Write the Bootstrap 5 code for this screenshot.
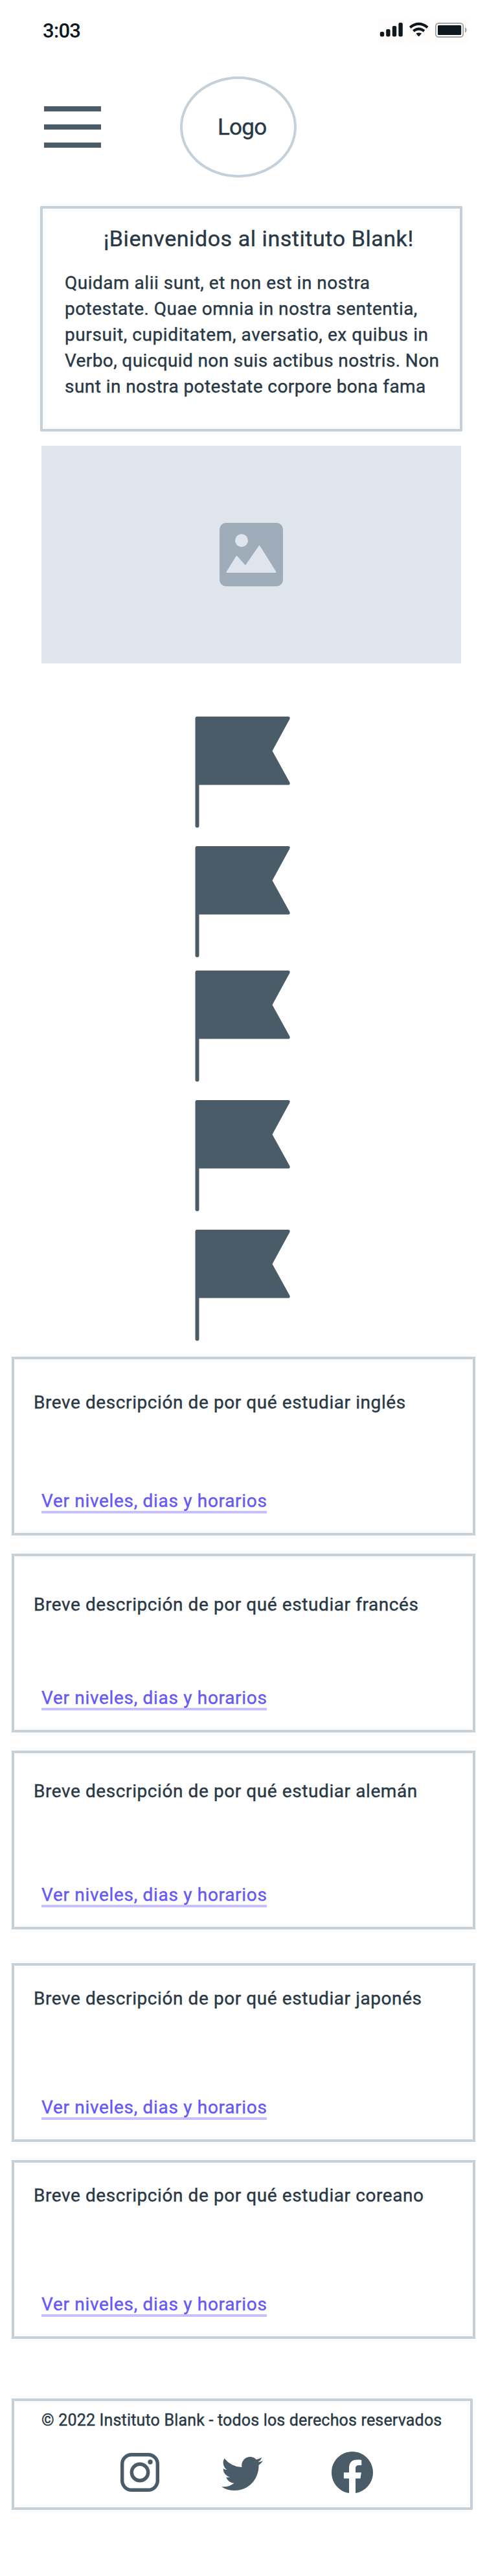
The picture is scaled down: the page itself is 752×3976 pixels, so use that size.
<!DOCTYPE html>
<html lang="es">
<head>
<meta charset="utf-8">
<meta name="viewport" content="width=device-width, initial-scale=1">
<title>Instituto Blank</title>
<link href="https://cdn.jsdelivr.net/npm/bootstrap@5.3.0/dist/css/bootstrap.min.css" rel="stylesheet">
<style>
  :root{--ink:#293845;--slate:#4b5c69;--line:#c4d0da}
  body{font-family:Roboto,"Liberation Sans",sans-serif;font-weight:400;font-size:28px;line-height:40px;color:var(--ink);background:#fff;min-height:3976px}
  svg{display:block;flex:none}
  .status-bar{padding:26px 30px 0 66px;height:66px}
  .clock{font-size:31px;font-weight:500;letter-spacing:-.7px;color:#10181f;padding-top:2px}
  .top-nav{padding:52px 0 0 68px}
  .menu-btn{margin-right:122px;color:var(--slate)}
  .logo{width:180px;height:156px;border:4px solid var(--line);border-radius:50%;padding:2px 0 0 54px;font-size:35px;letter-spacing:-.75px}
  .logo,.welcome,.course,.foot p{-webkit-text-stroke:.4px currentColor}
  .box{border:4px solid var(--line);border-radius:0;background:#fff}
  .welcome{margin:44px 38px 0 62px;height:348px;padding:26px 0 0 34px}
  .welcome h1{font-size:34px;line-height:40px;font-weight:400;letter-spacing:.56px;margin:0 0 29px 60px}
  .welcome p span{display:block;white-space:nowrap}
  .k1{letter-spacing:.51px}.k2{letter-spacing:.45px}.k3{letter-spacing:.59px}.k4{letter-spacing:.38px}.k5{letter-spacing:.44px}
  .hero{margin:22px 40px 0 64px;height:336px;background:#dfe5ed}
  .flags{margin:82px 0 0 301px;gap:28px;color:var(--slate)}
  .flags svg:nth-child(2){margin-bottom:-8px}
  .courses{margin:24px 18px 0;gap:28px}
  .course{height:276px;padding:31px 0 30px 30px;letter-spacing:.58px;white-space:nowrap}
  .course a{height:40px;width:348px;margin-left:12px;padding-top:1px;color:#6558f5;border-bottom:4px solid #c8c0fd;letter-spacing:.69px;text-decoration:none}
  .foot{margin:92px 22px 0 18px;height:172px;padding-top:14px}
  .foot p{font-size:25px;line-height:32px;letter-spacing:.18px;margin:0 0 32px 42px;white-space:nowrap}
  .social{margin-left:164px;color:var(--slate)}
  .social a{color:inherit}
  .social a:nth-child(2){margin-left:96px}
  .social a:nth-child(3){margin-left:106px}
</style>
</head>
<body>
<header>
  <div class="status-bar d-flex justify-content-between">
    <span class="clock">3:03</span>
    <svg width="138" height="40" viewBox="584 26 138 40" fill="#10181f">
      <path fill="#fffdfb" d="M584 26h40v40h-40zM626 26h40v40h-40zM668 26h54v40h-54z"/>
      <rect x="586.8" y="49" width="6.4" height="7.5" rx="2.3"/><rect x="596.2" y="45" width="6.4" height="11.5" rx="2.3"/><rect x="605.8" y="40" width="6.4" height="16.5" rx="2.3"/><rect x="615.4" y="35" width="6.4" height="21.5" rx="2.3"/>
      <path d="M633.2 42.3Q646.7 31.6 660.2 42.3" fill="none" stroke="#10181f" stroke-width="4.2"/>
      <path d="M638.3 47.9Q646.7 41.3 655.1 47.9" fill="none" stroke="#10181f" stroke-width="4"/>
      <path d="M642.3 51.7q4.4-2.6 8.8 0L646.7 56.5z"/>
      <rect x="672.8" y="35.8" width="42.4" height="21.4" rx="4.5" fill="#fff" stroke="#9c9c9c" stroke-width="1.7"/>
      <rect x="676" y="39" width="36.2" height="15" rx="1.5"/>
      <path d="M718 42q2.6 1.2 2.6 4.2t-2.6 4.2z" fill="#a3a3a3"/>
    </svg>
  </div>
  <nav class="top-nav d-flex align-items-center">
    <a class="menu-btn" href="#" aria-label="Menú"><svg width="88" height="64" viewBox="0 0 88 64" fill="currentColor"><path d="M0 0h88v8H0zM0 28h88v8H0zM0 56h88v8H0z"/></svg></a>
    <div class="logo d-flex align-items-center">Logo</div>
  </nav>
</header>
<main>
  <section class="box welcome">
    <h1>¡Bienvenidos al instituto Blank!</h1>
    <p class="m-0"><span class="k1">Quidam alii sunt, et non est in nostra</span><span class="k2">potestate. Quae omnia in nostra sententia,</span><span class="k3">pursuit, cupiditatem, aversatio, ex quibus in</span><span class="k4">Verbo, quicquid non suis actibus nostris. Non</span><span class="k5">sunt in nostra potestate corpore bona fama</span></p>
  </section>
  <div class="hero d-flex align-items-center justify-content-center">
    <svg width="98" height="98" viewBox="0 0 98 98"><rect width="98" height="98" rx="10" fill="#9eadb9"/><circle cx="34" cy="27.3" r="10" fill="#dfe5ed"/><path d="M26.4 52L40 67 61.5 36 86.5 76H11.5z" fill="#dfe5ed" stroke="#dfe5ed" stroke-width="2" stroke-linejoin="round"/></svg>
  </div>
  <div class="flags d-flex flex-column">
    <svg width="148" height="172" viewBox="0 0 148 172" fill="currentColor"><path id="flag" d="M3 0H144.500Q148 .6 146 4.500L119.500 53 146 101Q148 105 144.500 105.500H6.500V168.500a3 3 0 0 1-6 0V3Q.5 0 3 0z"/></svg>
    <svg width="148" height="172" viewBox="0 0 148 172" fill="currentColor"><use href="#flag"/></svg>
    <svg width="148" height="172" viewBox="0 0 148 172" fill="currentColor"><use href="#flag"/></svg>
    <svg width="148" height="172" viewBox="0 0 148 172" fill="currentColor"><use href="#flag"/></svg>
    <svg width="148" height="172" viewBox="0 0 148 172" fill="currentColor"><use href="#flag"/></svg>
  </div>
  <div class="courses d-flex flex-column">
    <article class="box course d-flex flex-column justify-content-between"><div class="pt-3">Breve descripción de por qué estudiar inglés</div><a href="#">Ver niveles, dias y horarios</a></article>
    <article class="box course d-flex flex-column justify-content-between"><div class="pt-4">Breve descripción de por qué estudiar francés</div><a href="#">Ver niveles, dias y horarios</a></article>
    <article class="box course d-flex flex-column justify-content-between"><div class="pt-2">Breve descripción de por qué estudiar alemán</div><a href="#">Ver niveles, dias y horarios</a></article>
    <article class="box course d-flex flex-column justify-content-between mt-4"><div>Breve descripción de por qué estudiar japonés</div><a href="#">Ver niveles, dias y horarios</a></article>
    <article class="box course d-flex flex-column justify-content-between"><div>Breve descripción de por qué estudiar coreano</div><a href="#">Ver niveles, dias y horarios</a></article>
  </div>
</main>
<footer class="box foot">
  <p>© 2022 Instituto Blank - todos los derechos reservados</p>
  <div class="social d-flex align-items-center">
    <a href="#" aria-label="Instagram"><svg width="60" height="60" viewBox="0 0 60 60" fill="none" stroke="currentColor" stroke-width="5.4"><rect x="2.700" y="2.700" width="54.600" height="54.600" rx="14.500"/><circle cx="30" cy="30" r="12.700"/><circle cx="46" cy="14" r="3.700" fill="currentColor" stroke="none"/></svg></a>
    <a href="#" aria-label="Twitter"><svg width="64" height="64" viewBox="0 0 16 16" fill="currentColor"><path d="M5.026 15c6.038 0 9.341-5.003 9.341-9.334 0-.14 0-.282-.006-.422A6.685 6.685 0 0 0 16 3.542a6.658 6.658 0 0 1-1.889.518 3.301 3.301 0 0 0 1.447-1.817 6.533 6.533 0 0 1-2.087.793A3.286 3.286 0 0 0 7.875 6.030a9.325 9.325 0 0 1-6.767-3.429 3.289 3.289 0 0 0 1.018 4.382A3.323 3.323 0 0 1 .640 6.575v.045a3.288 3.288 0 0 0 2.632 3.218 3.203 3.203 0 0 1-.865.115 3.230 3.230 0 0 1-.614-.057 3.283 3.283 0 0 0 3.067 2.277A6.588 6.588 0 0 1 .780 13.580a6.320 6.320 0 0 1-.780-.045A9.344 9.344 0 0 0 5.026 15z"/></svg></a>
    <a href="#" aria-label="Facebook"><svg width="64" height="64" viewBox="0 0 16 16" fill="currentColor"><path d="M16 8.049c0-4.446-3.582-8.050-8-8.050C3.580 0-.002 3.603-.002 8.050c0 4.017 2.926 7.347 6.750 7.951v-5.625h-2.030V8.050H6.750V6.275c0-2.017 1.195-3.131 3.022-3.131.876 0 1.791.157 1.791.157v1.980h-1.009c-.993 0-1.303.621-1.303 1.258v1.510h2.218l-.354 2.326H9.250V16c3.824-.604 6.750-3.934 6.750-7.951z"/></svg></a>
  </div>
</footer>
<script src="https://cdn.jsdelivr.net/npm/bootstrap@5.3.0/dist/js/bootstrap.bundle.min.js"></script>
</body>
</html>
